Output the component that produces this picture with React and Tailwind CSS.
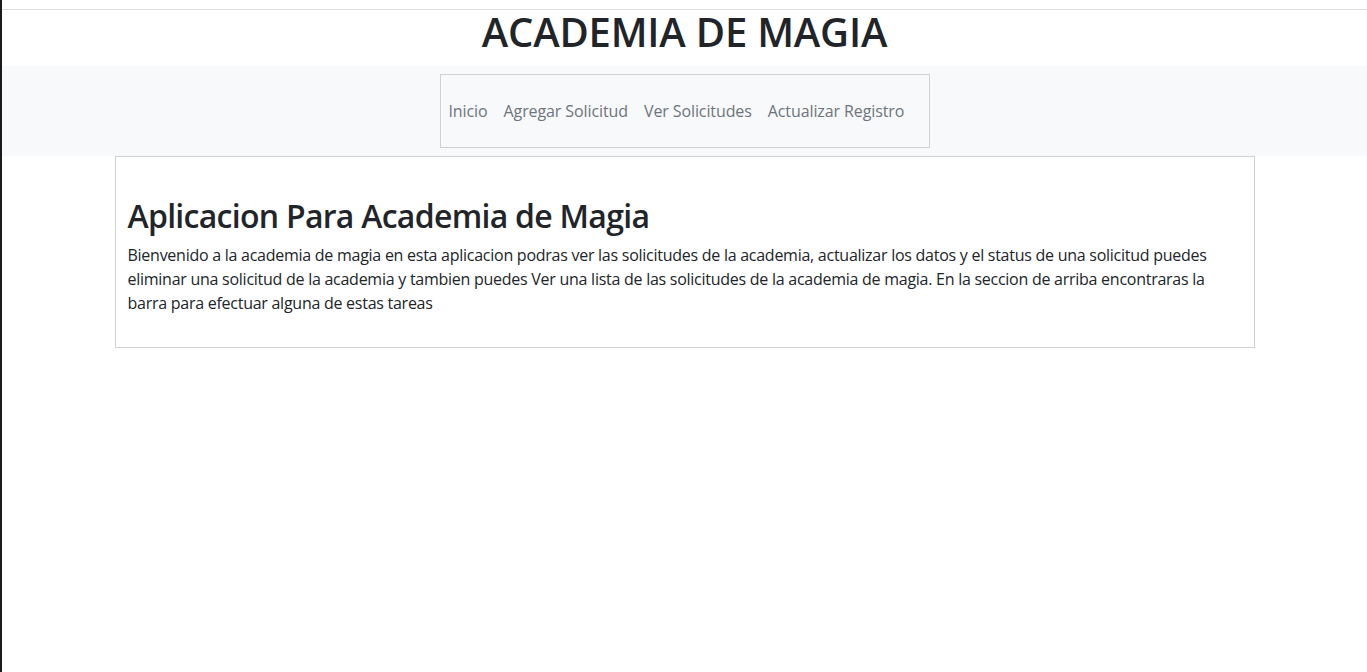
import React from 'react';

const links = ['Inicio', 'Agregar Solicitud', 'Ver Solicitudes', 'Actualizar Registro'];

const App = () => {
  return (
    <div className="min-h-[672px] bg-white border-l-2 border-[#1b1b1b] text-[#212529]" style={{ fontFamily: '"Open Sans", "Noto Sans", sans-serif' }}>
      <div className="h-[9px]" />
      <div className="border-t border-[#dcdcdc] pb-3">
        <h1 className="text-center text-[40px] leading-[44px] font-semibold tracking-[-0.2px]">ACADEMIA DE MAGIA</h1>
      </div>

      <div className="bg-[#f8f9fa] h-[90px] flex justify-center pt-2">
        <nav className="w-[490px] h-[74px] border border-[#cfd1d3] flex items-center gap-4 px-2">
          {links.map((l) => (
            <a key={l} className="text-[16px] text-[#6c757d] tracking-[-0.1px]">{l}</a>
          ))}
        </nav>
      </div>

      <div className="w-[1140px] mx-auto">
        <div className="border border-[#cfd1d3] px-3 pt-[40px] pb-[32px]">
          <h2 className="text-[32px] leading-[38px] font-semibold mb-2 tracking-[-0.72px]">Aplicacion Para Academia de Magia</h2>
          <p className="text-[16px] leading-6 tracking-[-0.26px]">
            Bienvenido a la academia de magia en esta aplicacion podras ver las solicitudes de la academia, actualizar los datos y el status de una solicitud puedes eliminar una solicitud de la academia y tambien puedes Ver una lista de las solicitudes de la academia de magia. En la seccion de arriba encontraras la barra para efectuar alguna de estas tareas
          </p>
        </div>
      </div>
    </div>
  );
};

export default App;
